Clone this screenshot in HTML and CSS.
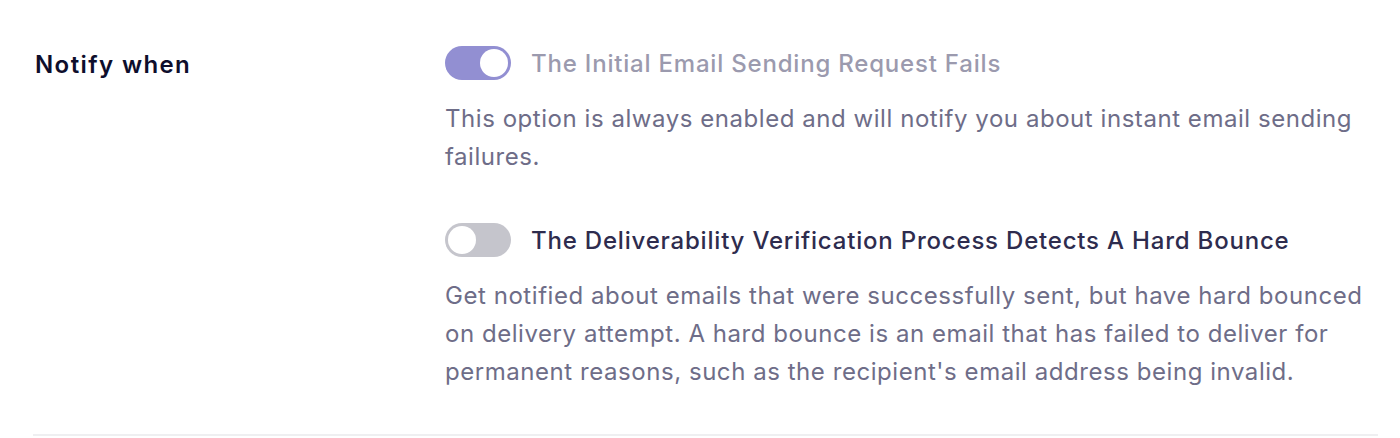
FILE: index.html
```html
<!DOCTYPE html>
<html lang="en">
<head>
  <meta charset="utf-8">
  <title>Notification Settings</title>
  <link rel="stylesheet" href="styles.css">
</head>
<body>
  <div class="setting">
    <div class="setting-label">Notify when</div>
    <div class="setting-options">
      <div class="option">
        <div class="option-head">
          <span class="toggle on disabled"><span class="knob"></span></span>
          <span class="option-title muted">The Initial Email Sending Request Fails</span>
        </div>
        <p class="option-desc">This option is always enabled and will notify you about instant email sending failures.</p>
      </div>
      <div class="option">
        <div class="option-head">
          <span class="toggle"><span class="knob"></span></span>
          <span class="option-title">The Deliverability Verification Process Detects A Hard Bounce</span>
        </div>
        <p class="option-desc">Get notified about emails that were successfully sent, but have hard bounced on delivery attempt. A hard bounce is an email that has failed to deliver for permanent reasons, such as the recipient's email address being invalid.</p>
      </div>
    </div>
  </div>
</body>
</html>
```

FILE: styles.css
```css
body {
  margin: 0;
  font-family: Inter, "Noto Sans", sans-serif;
  background: #fff;
  color: #6e6d88;
}

.setting {
  display: flex;
  margin: 0 22px 0 33px;
  padding: 44px 0 43px 2px;
  border-bottom: 2px solid #efeff1;
}

.setting-label {
  width: 410px;
  flex-shrink: 0;
  font-size: 24px;
  font-weight: 600;
  letter-spacing: 1.4px;
  line-height: 42px;
  color: #0e0e2c;
}

.setting-options {
  flex: 1;
  display: flex;
  flex-direction: column;
  gap: 45px;
}

.option-head {
  display: flex;
  align-items: center;
  gap: 20px;
  height: 38px;
}

.toggle {
  width: 66px;
  height: 34px;
  border-radius: 17px;
  background: #c5c5cc;
  display: flex;
  align-items: center;
  padding: 0 3px;
  box-sizing: border-box;
  flex-shrink: 0;
}

.toggle.on {
  background: #928fd2;
  justify-content: flex-end;
}

.knob {
  width: 28px;
  height: 28px;
  border-radius: 50%;
  background: #fff;
}

.option-title {
  font-size: 24px;
  font-weight: 500;
  letter-spacing: 0.8px;
  color: #2e2c4e;
}

.option-title.muted {
  color: #9b9aae;
}

.option-desc {
  margin: 18px 0 0;
  font-size: 24px;
  letter-spacing: 0.55px;
  line-height: 38px;
}
```
